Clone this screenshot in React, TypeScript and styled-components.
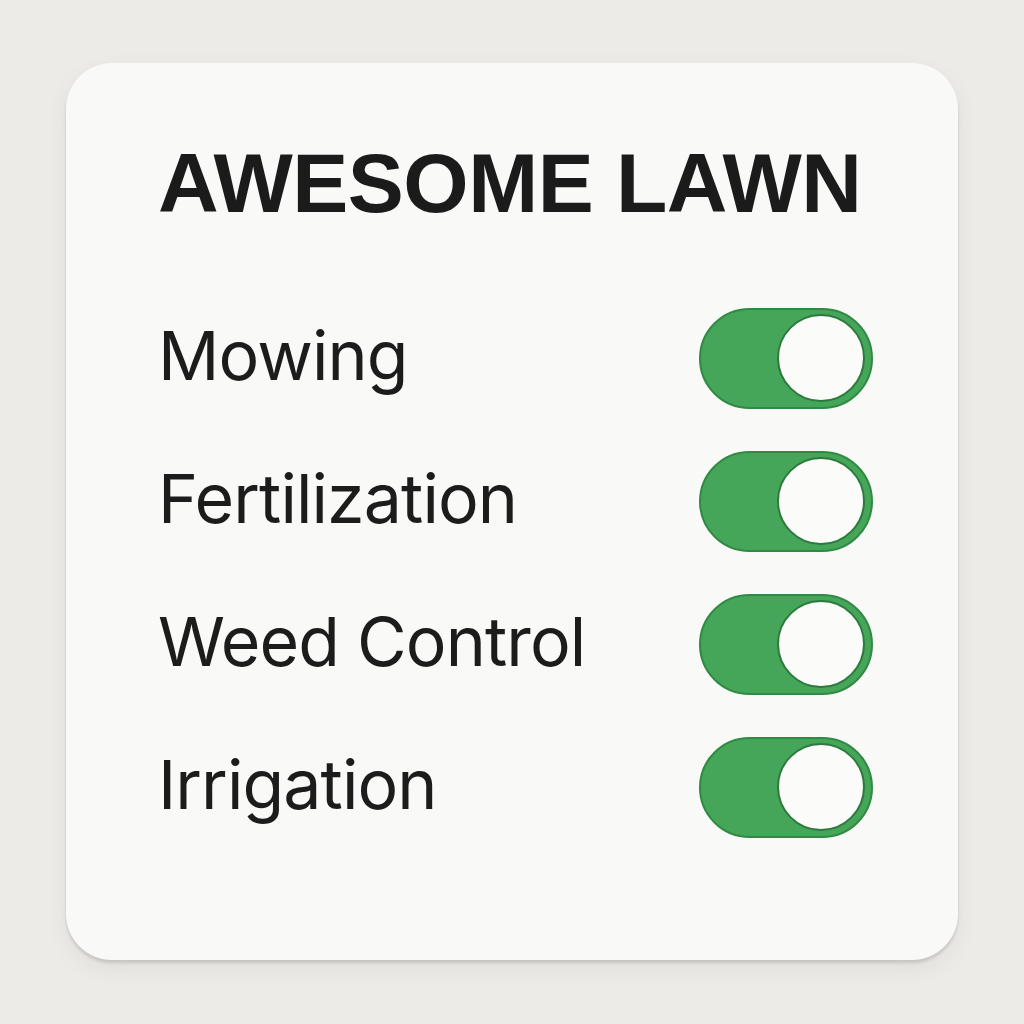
import React from 'react';
import styled, { createGlobalStyle } from 'styled-components';

const GlobalStyle = createGlobalStyle`
  html, body {
    margin: 0;
    padding: 0;
    background: #ecebe8;
  }
  * {
    box-sizing: border-box;
  }
`;

const Page = styled.div`
  width: 1024px;
  height: 1024px;
  padding: 63px 66px 0 66px;
  background: #ecebe8;
`;

const Card = styled.div`
  width: 892px;
  height: 897px;
  background: #f9f9f7;
  border-radius: 46px;
  box-shadow: 0 3px 3px rgba(0, 0, 0, 0.12), 0 8px 24px rgba(0, 0, 0, 0.06);
  padding: 78px 85px 0 92px;
`;

const Title = styled.h1`
  margin: 0;
  font-family: 'Liberation Sans', Arial, sans-serif;
  font-weight: 700;
  font-size: 84px;
  line-height: 1;
  color: #1b1b1b;
  letter-spacing: -0.5px;
`;

const List = styled.div`
  margin-top: 83px;
  display: flex;
  flex-direction: column;
  gap: 43px;
`;

const Row = styled.div`
  display: flex;
  align-items: center;
  justify-content: space-between;
  height: 100px;
`;

const Label = styled.span`
  font-family: Inter, 'Noto Sans', sans-serif;
  font-size: 68px;
  font-weight: 400;
  color: #1c1c1c;
  letter-spacing: -0.9px;
  margin-bottom: 6px;
`;

const Track = styled.div<{ $on: boolean }>`
  width: 174px;
  height: 101px;
  border-radius: 51px;
  background: ${(p) => (p.$on ? '#45a659' : '#d6d6d4')};
  border: 2px solid ${(p) => (p.$on ? '#2f8a44' : '#b8b8b6')};
  display: flex;
  align-items: center;
  justify-content: ${(p) => (p.$on ? 'flex-end' : 'flex-start')};
  padding: 0 6px;
`;

const Knob = styled.div`
  width: 88px;
  height: 88px;
  border-radius: 50%;
  background: #fbfbf9;
  border: 2px solid #2c7a3d;
`;

const Toggle: React.FC<{ on: boolean }> = ({ on }) => (
  <Track $on={on}>
    <Knob />
  </Track>
);

const services = ['Mowing', 'Fertilization', 'Weed Control', 'Irrigation'];

export default function App() {
  return (
    <>
      <GlobalStyle />
      <Page>
        <Card>
          <Title>AWESOME LAWN</Title>
          <List>
            {services.map((s) => (
              <Row key={s}>
                <Label>{s}</Label>
                <Toggle on />
              </Row>
            ))}
          </List>
        </Card>
      </Page>
    </>
  );
}
